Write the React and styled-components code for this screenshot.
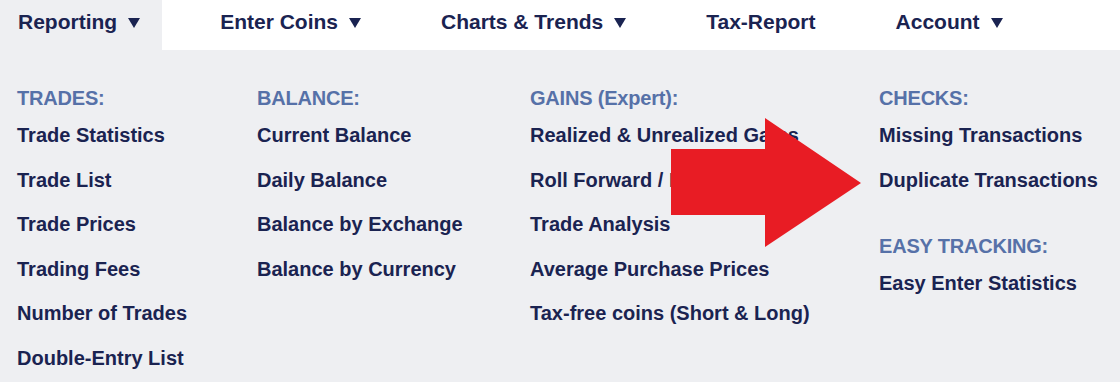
import React from 'react';
import styled, { createGlobalStyle } from 'styled-components';

const GlobalStyle = createGlobalStyle`
  html, body {
    margin: 0;
    padding: 0;
    background: #eeeff2;
    font-family: "Liberation Sans", Arial, sans-serif;
  }
`;

const navItems = [
  { label: 'Reporting', caret: true, active: true },
  { label: 'Enter Coins', caret: true },
  { label: 'Charts & Trends', caret: true },
  { label: 'Tax-Report' },
  { label: 'Account', caret: true },
];

const columns = [
  [
    { title: 'TRADES:', items: ['Trade Statistics', 'Trade List', 'Trade Prices', 'Trading Fees', 'Number of Trades', 'Double-Entry List'] },
  ],
  [
    { title: 'BALANCE:', items: ['Current Balance', 'Daily Balance', 'Balance by Exchange', 'Balance by Currency'] },
  ],
  [
    {
      title: 'GAINS (Expert):',
      items: ['Realized & Unrealized Gains', 'Roll Forward / Backward', 'Trade Analysis', 'Average Purchase Prices', 'Tax-free coins (Short & Long)'],
    },
  ],
  [
    { title: 'CHECKS:', items: ['Missing Transactions', 'Duplicate Transactions'] },
    { title: 'EASY TRACKING:', items: ['Easy Enter Statistics'] },
  ],
];

//Main component
export default function App() {
  return (
    <Page>
      <GlobalStyle />
      <NavBar>
        {navItems.map((n) => (
          <NavTab key={n.label} $active={n.active}>
            {n.label}
            {n.caret && <Caret />}
          </NavTab>
        ))}
      </NavBar>
      <MenuPanel>
        {columns.map((col, i) => (
          <Column key={i}>
            {col.map((sec) => (
              <Section key={sec.title}>
                <Heading>{sec.title}</Heading>
                {sec.items.map((it) => (
                  <Item key={it}>{it}</Item>
                ))}
              </Section>
            ))}
          </Column>
        ))}
        <Arrow viewBox="0 0 190 129" width="190" height="129">
          <polygon points="0,31 94,31 94,0 190,65 94,129 94,97 0,97" fill="#e81c24" />
        </Arrow>
      </MenuPanel>
    </Page>
  );
}

const Page = styled.div`
  width: 1120px;
  height: 382px;
  overflow: hidden;
  background: #eeeff2;
`;

const NavBar = styled.nav`
  height: 50px;
  background: #ffffff;
  display: flex;
  align-items: stretch;
  gap: 40px;
`;

const NavTab = styled.div`
  display: flex;
  align-items: center;
  padding: 0 22px 6px 18px;
  font-size: 21px;
  font-weight: bold;
  color: #1a2351;
  background: ${(p) => (p.$active ? '#eeeff2' : 'transparent')};
`;

const Caret = styled.span`
  width: 0;
  height: 0;
  margin-left: 11px;
  margin-top: 1px;
  border-left: 6.5px solid transparent;
  border-right: 6.5px solid transparent;
  border-top: 10px solid #1a2351;
`;

const MenuPanel = styled.div`
  position: relative;
  display: grid;
  grid-template-columns: 240px 273px 349px 1fr;
  padding: 33px 17px 0;
`;

const Column = styled.div`
  display: flex;
  flex-direction: column;
`;

const Section = styled.div`
  display: flex;
  flex-direction: column;
  & + & {
    margin-top: 29px;
  }
`;

const Heading = styled.div`
  font-size: 20px;
  line-height: 30px;
  font-weight: bold;
  color: #5671a8;
  letter-spacing: -0.2px;
`;

const Item = styled.div`
  font-size: 20px;
  line-height: 44.6px;
  font-weight: bold;
  color: #1a2351;
  white-space: nowrap;
`;

const Arrow = styled.svg`
  position: absolute;
  left: 671px;
  top: 68px;
`;
